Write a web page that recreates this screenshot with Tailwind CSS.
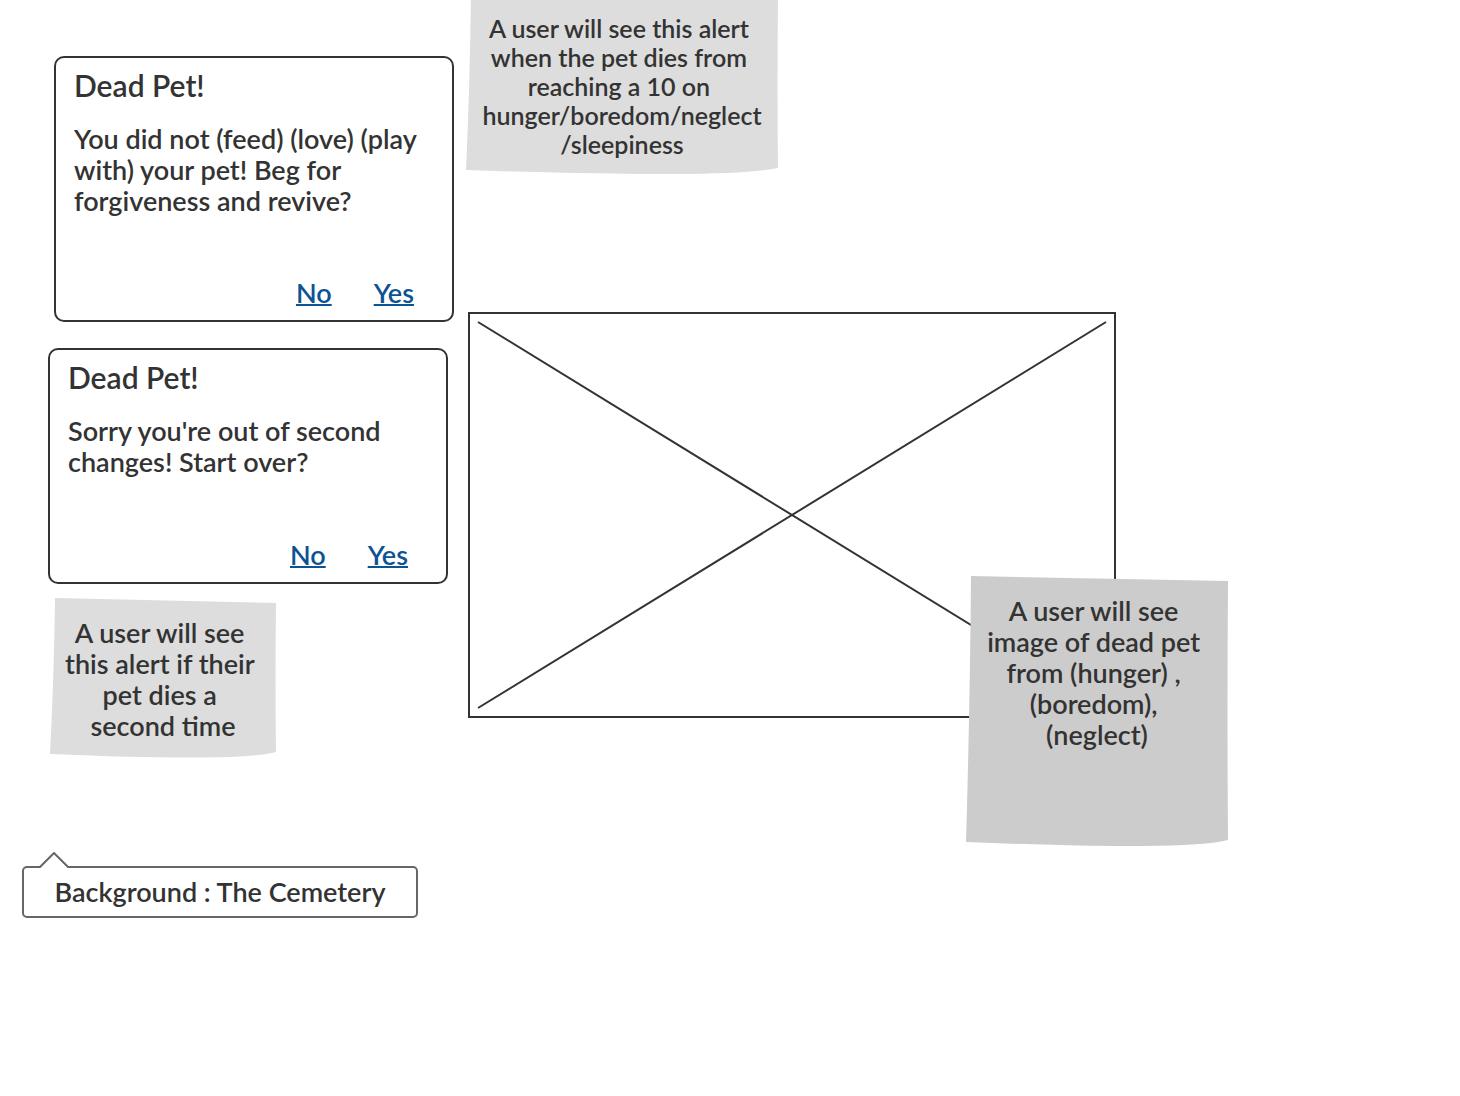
<!DOCTYPE html>
<html lang="en">
<head>
<meta charset="utf-8">
<meta name="viewport" content="width=device-width, initial-scale=1">
<title>Dead Pet wireframe</title>
<script src="https://cdn.jsdelivr.net/npm/@tailwindcss/browser@4"></script>
</head>
<body class="min-h-screen bg-white font-['Lato',sans-serif] text-[27px] leading-[31px] font-semibold text-[#333]">
<main class="flex gap-3">

  <!-- Alerts and background label -->
  <div class="flex w-[454px] shrink-0 flex-col items-start">
    <section class="mt-14 ml-[54px] flex min-h-[266px] w-[400px] flex-col rounded-[10px] border-2 border-[#333] bg-white pt-2 pb-3 pl-[18px]">
      <h2 class="text-[30px] leading-[38px]">Dead Pet!</h2>
      <p class="mt-[19px]">You did not (feed) (love) (play<br>with) your pet! Beg for<br>forgiveness and revive?</p>
      <div class="mt-auto flex justify-end gap-[42px] pr-[38px] text-[#0b5394]">
        <a href="#" class="underline decoration-2 underline-offset-1">No</a>
        <a href="#" class="underline decoration-2 underline-offset-1">Yes</a>
      </div>
    </section>

    <section class="mt-[26px] ml-12 flex min-h-[236px] w-[400px] flex-col rounded-[10px] border-2 border-[#333] bg-white pt-2 pb-3 pl-[18px]">
      <h2 class="text-[30px] leading-[38px]">Dead Pet!</h2>
      <p class="mt-[19px]">Sorry you're out of second<br>changes! Start over?</p>
      <div class="mt-auto flex justify-end gap-[42px] pr-[38px] text-[#0b5394]">
        <a href="#" class="underline decoration-2 underline-offset-1">No</a>
        <a href="#" class="underline decoration-2 underline-offset-1">Yes</a>
      </div>
    </section>

    <aside class="relative isolate mt-3.5 ml-[50px] h-40 w-[226px] pt-[19px] text-center">
      <svg class="absolute inset-0 -z-10 h-full w-full" viewBox="0 0 226 160" preserveAspectRatio="none" aria-hidden="true"><path fill="#ddd" d="M5 0 226 5Q225 80 226 154Q190 164 0 156Q4 80 5 0Z"/></svg>
      <p class="whitespace-pre">A user will see 
this alert if their 
pet dies a 
second time</p>
    </aside>

    <div class="relative mt-[108px] ml-[22px] w-[396px] rounded-[5px] border-2 border-[#666] bg-white py-2 text-center">
      <svg class="absolute -top-4 left-[14px] h-4 w-8" viewBox="0 0 32 16" aria-hidden="true"><path fill="#fff" stroke="#666" stroke-width="2" d="M0 17 16 1 32 17"/></svg>
      <p class="whitespace-nowrap leading-8">Background : The Cemetery</p>
    </div>
  </div>

  <!-- Picture of the pet with its notes -->
  <div class="mr-[232px] min-w-[640px] flex-1">
    <aside class="relative isolate h-[174px] w-[312px] pt-[14px] text-center text-[25px] leading-[29px]">
      <svg class="absolute inset-0 -z-10 h-full w-full" viewBox="0 0 312 174" preserveAspectRatio="none" aria-hidden="true"><path fill="#ddd" d="M5 -5 312 0Q311 90 312 168Q260 179 0 170Q4 80 5 -5Z"/></svg>
      <p class="whitespace-pre">A user will see this alert 
when the pet dies from 
reaching a 10 on 
hunger/boredom/neglect
/sleepiness</p>
    </aside>

    <div class="relative mt-[138px] pr-28 pl-0.5">
      <figure class="h-[406px] border-2 border-[#333] bg-white p-2">
        <svg class="h-full w-full overflow-visible" viewBox="0 0 628 386" preserveAspectRatio="none" role="img" aria-label="Image placeholder"><path fill="none" stroke="#333" stroke-width="2" vector-effect="non-scaling-stroke" d="M0 0 628 386M628 0 0 386"/></svg>
      </figure>
      <aside class="absolute top-[264px] right-0 isolate h-[270px] w-[262px] pt-[19px] text-center">
        <svg class="absolute inset-0 -z-10 h-full w-full" viewBox="0 0 262 270" preserveAspectRatio="none" aria-hidden="true"><path fill="#ccc" d="M5 0 262 5Q261 135 262 264Q220 275 0 266Q4 130 5 0Z"/></svg>
        <p class="whitespace-pre">A user will see 
image of dead pet 
from (hunger) , 
(boredom), 
(neglect)</p>
      </aside>
    </div>
  </div>

</main>
</body>
</html>
